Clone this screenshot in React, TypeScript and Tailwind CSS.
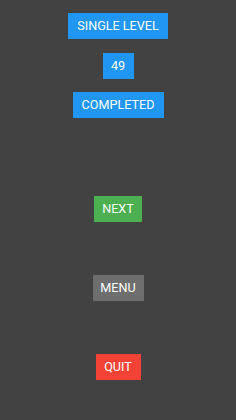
import React from "react";

function Box({ w, bg, children, className = "" }: { w: string; bg: string; children: React.ReactNode; className?: string }) {
  return (
    <div
      className={`${w} ${bg} ${className} h-[26px] flex items-center justify-center text-white text-[12.6px] leading-none`}
      style={{ fontFamily: "Roboto, 'Liberation Sans', sans-serif" }}
    >
      {children}
    </div>
  );
}

export default function App() {
  return (
    <div className="w-[236px] h-[420px] bg-[#424242] flex flex-col items-center pt-[13px]">
      <Box w="w-[100px]" bg="bg-[#2196f3]">SINGLE LEVEL</Box>
      <Box w="w-[31px]" bg="bg-[#2196f3]" className="mt-[14px]">49</Box>
      <Box w="w-[91px]" bg="bg-[#2196f3]" className="mt-[13px]">COMPLETED</Box>
      <Box w="w-[48px]" bg="bg-[#4caf50]" className="mt-[78px]">NEXT</Box>
      <Box w="w-[51px]" bg="bg-[#6e6e6e]" className="mt-[53px]">MENU</Box>
      <Box w="w-[45px]" bg="bg-[#f44336]" className="mt-[53px]">QUIT</Box>
    </div>
  );
}
